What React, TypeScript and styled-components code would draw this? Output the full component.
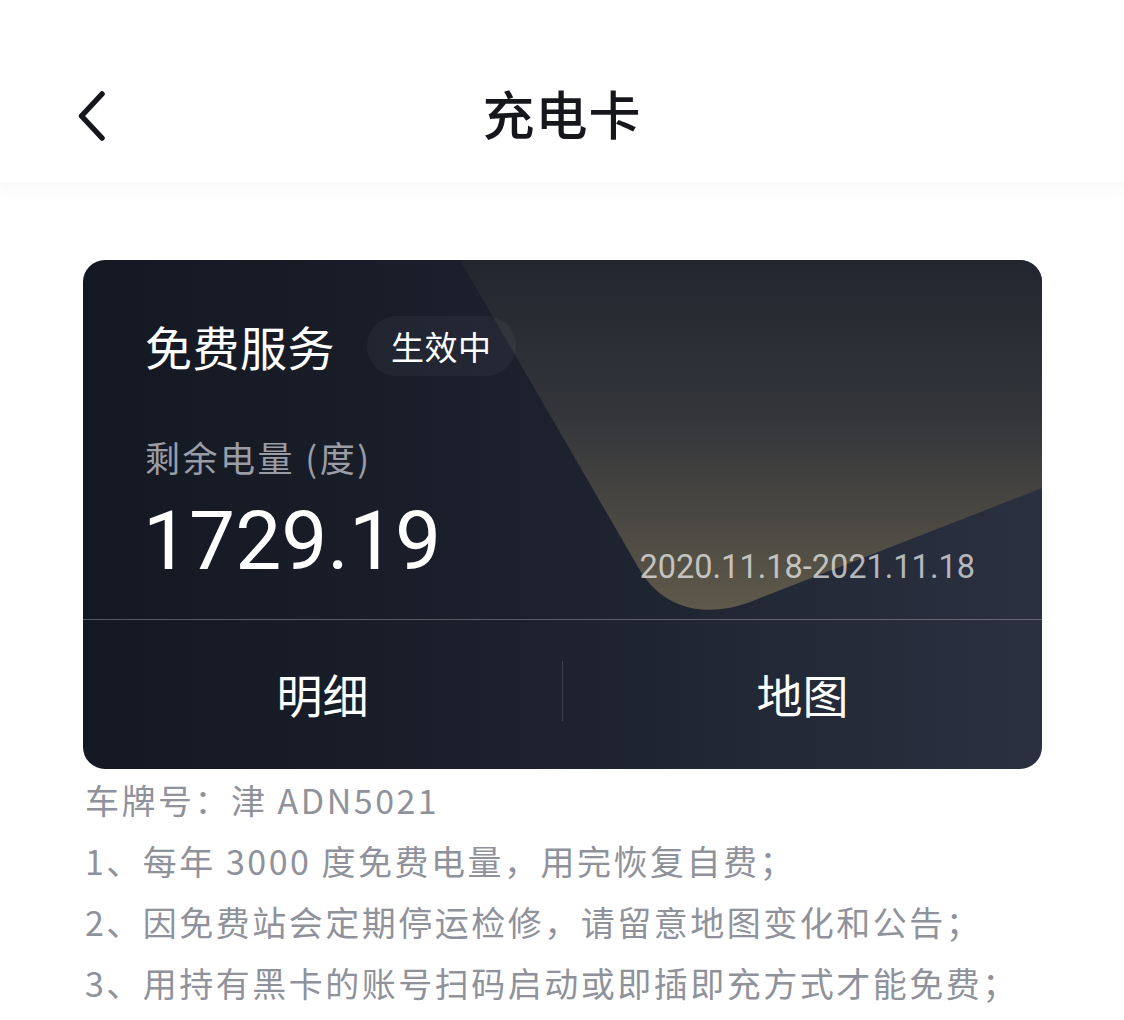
import React from 'react';
import styled, { createGlobalStyle } from 'styled-components';

const GlobalStyle = createGlobalStyle`
  html, body {
    margin: 0;
    padding: 0;
    background: #ffffff;
    font-family: "Noto Sans CJK SC", "Noto Sans", Roboto, sans-serif;
  }
`;

const Page = styled.div`
  width: 1124px;
  min-height: 1020px;
  background: #ffffff;
`;

const Header = styled.header`
  height: 182px;
  display: flex;
  align-items: flex-end;
  background: #ffffff;
  box-shadow: 0 6px 22px rgba(0, 0, 0, 0.035);
  position: relative;
  z-index: 1;
`;

const NavBar = styled.div`
  position: relative;
  width: 100%;
  height: 130px;
  box-sizing: border-box;
  padding-bottom: 10px;
  display: flex;
  align-items: center;
  justify-content: center;
`;

const BackButton = styled.button`
  position: absolute;
  left: 70px;
  top: 34px;
  width: 44px;
  height: 60px;
  padding: 0;
  border: 0;
  background: transparent;
  display: flex;
  align-items: center;
  justify-content: center;
`;

const Title = styled.h1`
  margin: 0;
  font-size: 52px;
  font-weight: 500;
  color: #15171c;
  letter-spacing: 1px;
`;

const Content = styled.main`
  padding: 78px 82px 0 83px;
`;

const Card = styled.section`
  position: relative;
  height: 509px;
  border-radius: 22px;
  overflow: hidden;
  background: linear-gradient(90deg, #141822 0%, #1b202c 45%, #252b39 80%, #2b3040 100%);
  display: flex;
  flex-direction: column;
`;

const CardArt = styled.svg`
  position: absolute;
  inset: 0;
  width: 100%;
  height: 100%;
  pointer-events: none;
`;

const CardTop = styled.div`
  position: relative;
  height: 360px;
  box-sizing: border-box;
  padding: 56px 67px 0 62px;
  border-bottom: 1px solid rgba(255, 255, 255, 0.28);
`;

const TitleRow = styled.div`
  display: flex;
  align-items: center;
  gap: 32px;
  height: 60px;
`;

const CardName = styled.div`
  font-size: 47px;
  font-weight: 400;
  color: #ffffff;
  line-height: 60px;
  letter-spacing: 0.5px;
`;

const Badge = styled.div`
  height: 60px;
  padding: 0 24px;
  border-radius: 30px;
  background: rgba(255, 255, 255, 0.04);
  color: #ffffff;
  font-size: 33px;
  line-height: 60px;
  letter-spacing: 0.5px;
`;

const Label = styled.div`
  margin-top: 58px;
  font-size: 35px;
  line-height: 46px;
  letter-spacing: 2.5px;
  color: #9a9da6;
`;

const ValueRow = styled.div`
  margin-top: 16px;
  height: 90px;
  display: flex;
  align-items: flex-end;
  justify-content: space-between;
`;

const Amount = styled.div`
  align-self: flex-start;
  font-family: Roboto, "Noto Sans", sans-serif;
  font-size: 82px;
  line-height: 90px;
  color: #ffffff;
  margin-left: -2px;
`;

const Period = styled.div`
  font-family: Roboto, "Noto Sans", sans-serif;
  font-size: 32.5px;
  line-height: 38px;
  color: rgba(255, 255, 255, 0.66);
`;

const Actions = styled.div`
  position: relative;
  flex: 1;
  display: flex;
  align-items: center;
`;

const Action = styled.button`
  flex: 1;
  height: 100%;
  border: 0;
  background: transparent;
  color: #ffffff;
  font-family: "Noto Sans CJK SC", sans-serif;
  font-size: 46px;
  padding: 0;
  padding-bottom: 4px;
`;

const Split = styled.div`
  width: 1px;
  height: 60px;
  margin-top: -8px;
  background: rgba(255, 255, 255, 0.16);
`;

const Notes = styled.div`
  padding-left: 2px;
  font-size: 34px;
  line-height: 61px;
  letter-spacing: 2.5px;
  color: #8f929b;
`;

const Note = styled.p`
  margin: 0;
  white-space: nowrap;
`;

function BackIcon () {
  return (
    <svg width='30' height='50' viewBox='0 0 30 50'>
      <path d='M25 3 L4.5 25 L25 47' fill='none' stroke='#15171c' strokeWidth='5.5' strokeLinecap='round' strokeLinejoin='round' />
    </svg>
  );
}

function Shine () {
  return (
    <CardArt viewBox='0 0 959 509' preserveAspectRatio='none'>
      <defs>
        <linearGradient id='shine' x1='0' y1='0' x2='0' y2='345' gradientUnits='userSpaceOnUse'>
          <stop offset='0' stopColor='#22262f' />
          <stop offset='0.45' stopColor='#33353a' />
          <stop offset='1' stopColor='#5d5849' />
        </linearGradient>
      </defs>
      <path
        d='M377 0 L558 312 C586 356 634 356 672 340 L959 228 L959 0 Z'
        fill='url(#shine)'
      />
    </CardArt>
  );
}

export default function App () {
  return (
    <Page>
      <GlobalStyle />
      <Header>
        <NavBar>
          <BackButton type='button'>
            <BackIcon />
          </BackButton>
          <Title>充电卡</Title>
        </NavBar>
      </Header>
      <Content>
        <Card>
          <Shine />
          <CardTop>
            <TitleRow>
              <CardName>免费服务</CardName>
              <Badge>生效中</Badge>
            </TitleRow>
            <Label>剩余电量 (度)</Label>
            <ValueRow>
              <Amount>1729.19</Amount>
              <Period>2020.11.18-2021.11.18</Period>
            </ValueRow>
          </CardTop>
          <Actions>
            <Action type='button'>明细</Action>
            <Split />
            <Action type='button'>地图</Action>
          </Actions>
        </Card>
        <Notes>
          <Note>车牌号：津 ADN5021</Note>
          <Note>1、每年 3000 度免费电量，用完恢复自费；</Note>
          <Note>2、因免费站会定期停运检修，请留意地图变化和公告；</Note>
          <Note>3、用持有黑卡的账号扫码启动或即插即充方式才能免费；</Note>
        </Notes>
      </Content>
    </Page>
  );
}
